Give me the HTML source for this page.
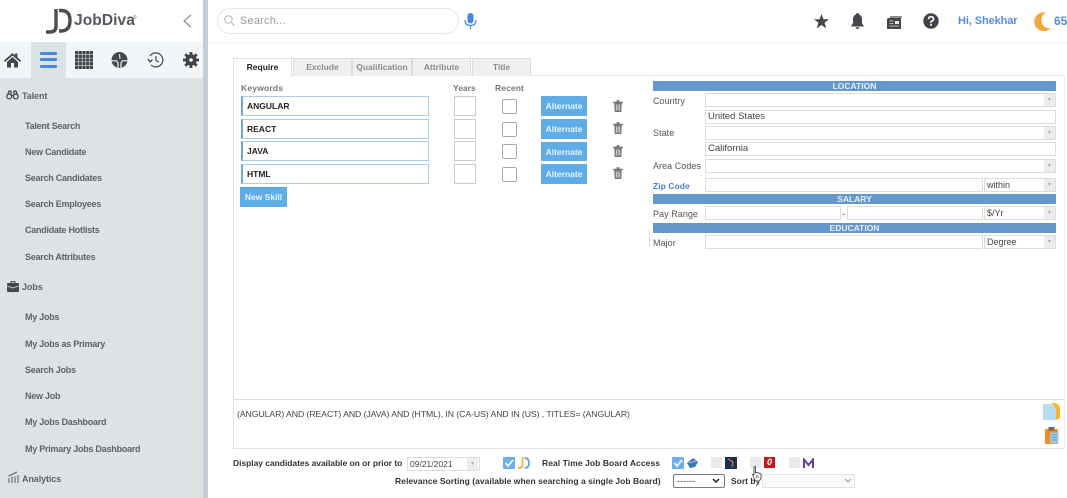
<!DOCTYPE html>
<html><head><meta charset="utf-8"><style>
html,body{margin:0;padding:0;background:#fff}
body{width:1067px;height:498px;overflow:hidden;position:relative;font-family:"Liberation Sans",sans-serif}
#r{position:absolute;left:0;top:0;width:1067px;height:498px;overflow:hidden;filter:blur(.35px)}
#r div,#r span.a,#r svg{position:absolute}
.t{white-space:nowrap;line-height:12px}
.n{left:25px;font:bold 9px/12px "Liberation Sans",sans-serif;color:#5d6369;white-space:nowrap;letter-spacing:-.25px}
.h{left:22px;font:bold 9px/12px "Liberation Sans",sans-serif;color:#5d6369;white-space:nowrap;letter-spacing:-.1px}
.tab{top:58px;height:17px;background:#f0f0f0;border:1px solid #dcdcdc;border-bottom:none;font:bold 8.5px/17px "Liberation Sans",sans-serif;color:#8b8b8b;text-align:center;box-sizing:content-box}
.kw{left:241px;width:185px;height:18px;background:#fff;border:1px solid #a9cde6;border-left:2px solid #6fa6d2;font:bold 8.5px/18px "Liberation Sans",sans-serif;color:#222;text-indent:4px}
.yr{left:454px;width:20px;height:18px;border:1px solid #ccc;background:#fff}
.rc{left:502px;width:13px;height:13px;border:1px solid #aaa;border-radius:2px;background:#fff}
.alt{left:541px;width:46px;height:20px;background:#5fade6;color:#e8f4fc;font:bold 8.5px/20px "Liberation Sans",sans-serif;text-align:center}
.lab{left:653px;font:9px/12px "Liberation Sans",sans-serif;color:#555;white-space:nowrap;letter-spacing:.05px}
.bar{left:653px;width:403px;height:10px;background:#6498cc;color:#e6eff8;font:bold 8.5px/10px "Liberation Sans",sans-serif;text-align:center}
.f{height:12px;border:1px solid #ddd;background:#fff;font:9.5px/12px "Liberation Sans",sans-serif;color:#444;text-indent:2px;white-space:nowrap}
.dd{width:11px;height:12px;background:#ececec;color:#aaa;font:5px/12px "Liberation Sans",sans-serif;text-align:center}
.b{font:bold 8.5px/12px "Liberation Sans",sans-serif;color:#333;white-space:nowrap}
.sq{width:11px;height:11px;background:#eaeaea}
</style></head><body><div id="r">

<!-- sidebar -->
<div style="left:0;top:0;width:203px;height:498px;background:#dde2e5"></div>
<div style="left:0;top:0;width:203px;height:42px;background:#fff"></div>
<div style="left:0;top:42px;width:203px;height:36px;background:#f2f6f9"></div>
<div style="left:31px;top:42px;width:35px;height:36px;background:#dde2e5"></div>
<div style="left:203px;top:0;width:5px;height:498px;background:#c4ced6"></div>

<!-- logo -->
<svg style="left:44px;top:8px" width="28" height="26" viewBox="0 0 28 26" fill="none" stroke="#4a4e52" stroke-width="3.4"><path d="M12 1V18Q12 24 6 24H2"/><path d="M15 2.500H17Q26 2.500 26 12.500Q26 23 17 23H15"/></svg>
<div class="t" style="left:74px;top:13px;font:bold 15.500px/16px 'Liberation Sans',sans-serif;color:#55595d;letter-spacing:.1px">JobDiva</div>
<div class="t" style="left:133px;top:15px;font:5px/6px 'Liberation Sans',sans-serif;color:#777">®</div>
<svg style="left:183px;top:14px" width="9" height="14" viewBox="0 0 9 14" fill="none" stroke="#777" stroke-width="1"><path d="M8 1 1 7 8 13"/></svg>

<!-- icon row -->
<svg style="left:4px;top:52px" width="17" height="16" viewBox="0 0 17 16" fill="#44484c"><path d="M8.500 1 0 8.500 1 10 8.500 3.500 16 10 17 8.500 13.500 5.500V1.500H11V3.300Z"/><path d="M3 10 8.500 5 14 10V15.500H10V11H7V15.500H3Z"/></svg>
<div style="left:40px;top:52px;width:17px;height:3px;background:#4a86dc;border-radius:1px"></div>
<div style="left:40px;top:58px;width:17px;height:3px;background:#4a86dc;border-radius:1px"></div>
<div style="left:40px;top:65px;width:17px;height:3px;background:#4a86dc;border-radius:1px"></div>
<svg style="left:75px;top:51px" width="18" height="18" viewBox="0 0 18 18"><rect width="18" height="18" fill="#3f4347"/><path d="M3.600 0V18M7.200 0V18M10.800 0V18M14.400 0V18M0 3.600H18M0 7.200H18M0 10.800H18M0 14.400H18" stroke="#c8ccd0" stroke-width=".7"/></svg>
<svg style="left:111px;top:51px" width="17" height="18" viewBox="0 0 17 18"><circle cx="8.500" cy="9" r="8" fill="#44484c"/><path d="M0 9.800H5.500L7 12V17M10 17V12L11.500 9.800H17" fill="none" stroke="#f2f6f9" stroke-width="1.200"/><path d="M8.500 3 9 8" stroke="#f2f6f9"/></svg>
<svg style="left:147px;top:51px" width="18" height="18" viewBox="0 0 18 18" fill="none" stroke="#44484c" stroke-width="1.200"><path d="M3 5A7 7 0 1 1 4 14"/><path d="M9 5V9.500L12 11"/><path d="M1 8 3 11 5.500 8.500" stroke-width="1.300"/></svg>
<svg style="left:183px;top:52px" width="16" height="16" viewBox="0 0 16 16"><circle cx="8" cy="8" r="4" fill="none" stroke="#3f4347" stroke-width="3.400"/><path d="M8 0V16M0 8H16M2.300 2.300 13.700 13.700M13.700 2.300 2.300 13.700" stroke="#3f4347" stroke-width="2.800"/><circle cx="8" cy="8" r="1.800" fill="#f2f6f9"/></svg>

<!-- menu -->
<svg style="left:6px;top:90px" width="13" height="10" viewBox="0 0 13 10" fill="none" stroke="#44484c" stroke-width="1.300"><circle cx="3.200" cy="6.500" r="2.400"/><circle cx="9.800" cy="6.500" r="2.400"/><path d="M5 5.500H8M1.500 5 3 1.200H5V5M11.500 5 10 1.200H8V5"/></svg>
<div class="h" style="top:90px">Talent</div>
<div class="n" style="top:120px">Talent Search</div>
<div class="n" style="top:146px">New Candidate</div>
<div class="n" style="top:172px">Search Candidates</div>
<div class="n" style="top:198px">Search Employees</div>
<div class="n" style="top:224px">Candidate Hotlists</div>
<div class="n" style="top:251px">Search Attributes</div>
<svg style="left:7px;top:281px" width="12" height="11" viewBox="0 0 12 11"><path d="M4 2V.6H8V2" fill="none" stroke="#44484c"/><rect y="2" width="12" height="9" rx="1" fill="#44484c"/><path d="M0 5 6 7 12 5" stroke="#dde2e5" fill="none" stroke-width=".7"/></svg>
<div class="h" style="top:281px">Jobs</div>
<div class="n" style="top:311px">My Jobs</div>
<div class="n" style="top:338px">My Jobs as Primary</div>
<div class="n" style="top:364px">Search Jobs</div>
<div class="n" style="top:390px">New Job</div>
<div class="n" style="top:416px">My Jobs Dashboard</div>
<div class="n" style="top:443px">My Primary Jobs Dashboard</div>
<svg style="left:8px;top:471px" width="11" height="12" viewBox="0 0 11 12" fill="none" stroke="#5a5f64"><path d="M1 12V7M4 12V5.500M7 12V5.500M10 12V4M.5 5 6 2.500 9 1"/></svg>
<div class="h" style="top:473px">Analytics</div>

<!-- header -->
<div style="left:208px;top:42px;width:859px;height:2px;background:#f6f6f6"></div>
<div style="left:217px;top:8px;width:240px;height:24px;border:1px solid #e8e8e8;border-radius:13px;background:#fff"></div>
<svg style="left:224px;top:15px" width="11" height="12" viewBox="0 0 11 12" fill="none" stroke="#bbb" stroke-width="1.100"><circle cx="4.500" cy="4.500" r="3.700"/><path d="M7.500 7.500 10.500 11"/></svg>
<div class="t" style="left:240px;top:15px;font:11px/12px 'Liberation Sans',sans-serif;color:#9a9a9a;letter-spacing:.2px">Search...</div>
<svg style="left:464px;top:13px" width="13" height="16" viewBox="0 0 13 16" fill="none"><rect x="3.500" y="0" width="6" height="10.500" rx="3" fill="#4a86dc"/><path d="M1 7Q1 12.500 6.500 12.500T12 7M6.500 12.500V16" stroke="#4a86dc" stroke-width="1.200"/></svg>
<svg style="left:814px;top:14px" width="15" height="15" viewBox="0 0 15 15" fill="#44484c"><path d="M7.500 0 9.500 5.300H15L10.600 8.700 12.300 14.500 7.500 11 2.700 14.500 4.400 8.700 0 5.300H5.500Z"/></svg>
<svg style="left:851px;top:13px" width="13" height="16" viewBox="0 0 13 16" fill="#44484c"><path d="M6.500 0Q8 0 8 1.500 11 2.500 11 6V10L13 13.500H0L2 10V6Q2 2.500 5 1.500 5 0 6.500 0Z"/><path d="M4.500 14.300H8.500Q8 16 6.500 16T4.500 14.300Z"/></svg>
<svg style="left:887px;top:16px" width="15" height="13" viewBox="0 0 15 13"><path d="M1 2H14V13H0V3Z" fill="#44484c"/><path d="M3 0H15V2H3Z" fill="#8a8e92"/><rect x="8" y="5" width="4" height="3" fill="#e8e8e8"/><path d="M2.500 5H6.500M2.500 7.500H6.500M2.500 10H12" stroke="#d8d8d8" stroke-width=".8"/></svg>
<svg style="left:923px;top:13px" width="16" height="16" viewBox="0 0 16 16"><circle cx="8" cy="8" r="7.700" fill="#3f4347"/><path d="M5.500 6.200Q5.500 3.700 8 3.700T10.500 6Q10.500 7.300 9 8T8 9.800" fill="none" stroke="#fff" stroke-width="1.600"/><rect x="7.100" y="10.800" width="1.800" height="1.800" fill="#fff"/></svg>
<div class="t" style="left:958px;top:15px;font:bold 11px/12px 'Liberation Sans',sans-serif;color:#5a8ddc;letter-spacing:-.1px">Hi, Shekhar</div>
<svg style="left:1034px;top:12px" width="17" height="19" viewBox="0 0 17 19"><path d="M12 .5A9.500 9.500 0 1 0 16.500 16.500A8.500 8.500 0 0 1 12 .5Z" fill="#f2a93c"/></svg>
<div class="t" style="left:1054px;top:15px;font:bold 12px/12px 'Liberation Sans',sans-serif;color:#5a8ddc">65</div>

<!-- form frame -->
<div style="left:233px;top:75px;width:832px;height:374px;border:1px solid #e2e2e2;border-right:1px solid #eee;box-sizing:border-box;background:#fff"></div>
<div style="left:234px;top:399px;width:831px;height:1px;background:#dcdcdc"></div>
<div style="left:649px;top:230px;width:1px;height:17px;background:#ddd"></div>

<!-- tabs -->
<div class="tab" style="left:233px;width:57px;background:#fff;color:#222;border-color:#e2e2e2;height:18px;z-index:2">Require</div>
<div class="tab" style="left:293px;width:57px">Exclude</div>
<div class="tab" style="left:352px;width:58px">Qualification</div>
<div class="tab" style="left:412px;width:57px">Attribute</div>
<div class="tab" style="left:472px;width:57px">Title</div>

<div class="t" style="left:241px;top:82px;font:bold 8.500px/12px 'Liberation Sans',sans-serif;color:#777;letter-spacing:.2px">Keywords</div>
<div class="t" style="left:453px;top:82px;font:bold 8.500px/12px 'Liberation Sans',sans-serif;color:#777">Years</div>
<div class="t" style="left:495px;top:82px;font:bold 8.500px/12px 'Liberation Sans',sans-serif;color:#777;letter-spacing:.1px">Recent</div>

<div class="kw" style="top:96px">ANGULAR</div><div class="yr" style="top:96px"></div><div class="rc" style="top:99px"></div><div class="alt" style="top:96px">Alternate</div>
<div class="kw" style="top:119px">REACT</div><div class="yr" style="top:119px"></div><div class="rc" style="top:122px"></div><div class="alt" style="top:119px">Alternate</div>
<div class="kw" style="top:141px">JAVA</div><div class="yr" style="top:141px"></div><div class="rc" style="top:144px"></div><div class="alt" style="top:142px;height:19px">Alternate</div>
<div class="kw" style="top:164px">HTML</div><div class="yr" style="top:164px"></div><div class="rc" style="top:167px"></div><div class="alt" style="top:164px">Alternate</div>
<div class="alt" style="left:240px;width:47px;height:20px;top:187px;line-height:20px">New Skill</div>

<svg style="left:613px;top:100px" width="10" height="12" viewBox="0 0 10 12"><path d="M0 1.800H10V3H0ZM3.500 1.800V.3H6.500V1.800" fill="#777"/><path d="M1.200 3H8.800L8.300 12H1.700Z" fill="#777"/><path d="M3.300 4.500V10.500M5 4.500V10.500M6.700 4.500V10.500" stroke="#e4e4e4" stroke-width=".8"/></svg>
<svg style="left:613px;top:122px" width="10" height="12" viewBox="0 0 10 12"><path d="M0 1.800H10V3H0ZM3.500 1.800V.3H6.500V1.800" fill="#777"/><path d="M1.200 3H8.800L8.300 12H1.700Z" fill="#777"/><path d="M3.300 4.500V10.500M5 4.500V10.500M6.700 4.500V10.500" stroke="#e4e4e4" stroke-width=".8"/></svg>
<svg style="left:613px;top:145px" width="10" height="12" viewBox="0 0 10 12"><path d="M0 1.800H10V3H0ZM3.500 1.800V.3H6.500V1.800" fill="#777"/><path d="M1.200 3H8.800L8.300 12H1.700Z" fill="#777"/><path d="M3.300 4.500V10.500M5 4.500V10.500M6.700 4.500V10.500" stroke="#e4e4e4" stroke-width=".8"/></svg>
<svg style="left:613px;top:167px" width="10" height="12" viewBox="0 0 10 12"><path d="M0 1.800H10V3H0ZM3.500 1.800V.3H6.500V1.800" fill="#777"/><path d="M1.200 3H8.800L8.300 12H1.700Z" fill="#777"/><path d="M3.300 4.500V10.500M5 4.500V10.500M6.700 4.500V10.500" stroke="#e4e4e4" stroke-width=".8"/></svg>

<!-- right panel -->
<div class="bar" style="top:81px">LOCATION</div>
<div class="lab" style="top:95px">Country</div>
<div class="f" style="left:705px;top:93px;width:349px"></div><div class="dd" style="left:1044px;top:94px">▼</div>
<div class="f" style="left:705px;top:110px;width:349px">United States</div>
<div class="lab" style="top:127px">State</div>
<div class="f" style="left:705px;top:126px;width:349px"></div><div class="dd" style="left:1044px;top:127px">▼</div>
<div class="f" style="left:705px;top:142px;width:349px">California</div>
<div class="lab" style="top:160px">Area Codes</div>
<div class="f" style="left:705px;top:159px;width:349px"></div><div class="dd" style="left:1044px;top:160px">▼</div>
<div class="lab" style="top:180px;color:#4a7fd0;font-weight:bold;font-size:8.500px">Zip Code</div>
<div class="f" style="left:705px;top:178px;width:276px"></div>
<div class="f" style="left:984px;top:178px;width:70px;font-size:9px">within</div><div class="dd" style="left:1044px;top:179px">▼</div>
<div class="bar" style="top:194px">SALARY</div>
<div class="lab" style="top:208px">Pay Range</div>
<div class="f" style="left:705px;top:206px;width:134px"></div>
<div class="t" style="left:842px;top:208px;font:9px/12px 'Liberation Sans',sans-serif;color:#555">-</div>
<div class="f" style="left:847px;top:206px;width:134px"></div>
<div class="f" style="left:984px;top:206px;width:70px;font-size:9px">$/Yr</div><div class="dd" style="left:1044px;top:207px">▼</div>
<div class="bar" style="top:223px">EDUCATION</div>
<div class="lab" style="top:237px">Major</div>
<div class="f" style="left:705px;top:235px;width:276px"></div>
<div class="f" style="left:984px;top:235px;width:70px;font-size:9px">Degree</div><div class="dd" style="left:1044px;top:236px">▼</div>

<!-- query -->
<div class="t" style="left:237px;top:408px;font:8.700px/12px 'Liberation Sans',sans-serif;color:#444;letter-spacing:-.07px">(ANGULAR) AND (REACT) AND (JAVA) AND (HTML), IN (CA-US) AND IN (US) , TITLES= (ANGULAR)</div>
<svg style="left:1043px;top:403px" width="17" height="17" viewBox="0 0 17 17"><path d="M8 0H12Q17 1 17 6V15L13 17V6Z" fill="#f7b52e"/><path d="M0 1H8L13 6V17H0Z" fill="#b5dcf3"/></svg>
<svg style="left:1045px;top:427px" width="14" height="17" viewBox="0 0 14 17"><rect y="2" width="13" height="15" rx="1" fill="#f28c1e"/><rect x="3.500" y="0" width="6" height="3.500" fill="#6a6a6a"/><rect x="5" y="5.500" width="8.500" height="11" fill="#9ec9e4"/><path d="M6.500 8H12M6.500 10.500H12M6.500 13H12" stroke="#5f93b5" stroke-width=".7"/></svg>

<!-- bottom -->
<div class="b" style="left:233px;top:457px;letter-spacing:-.04px">Display candidates available on or prior to</div>
<div class="f" style="left:407px;top:457px;width:71px;font-size:8.500px;line-height:12px">09/21/2021</div><div class="dd" style="left:467px;top:458px">▼</div>
<svg style="left:503px;top:457px" width="12" height="12" viewBox="0 0 12 12"><rect width="12" height="12" rx="1" fill="#6fb0e8"/><path d="M2.500 6 5 9 10 3" fill="none" stroke="#fff" stroke-width="1.600"/></svg>
<svg style="left:518px;top:457px" width="12" height="12" viewBox="0 0 12 12" fill="none" stroke-width="2"><path d="M4.500 0V8Q4.500 11 1 11H0" stroke="#f5b93e"/><path d="M6.500 1Q11 1 11 6T6.500 11" stroke="#6fa8e0"/></svg>
<div class="b" style="left:542px;top:457px;letter-spacing:.07px">Real Time Job Board Access</div>
<div class="b" style="left:395px;top:475px;letter-spacing:.04px">Relevance Sorting (available when searching a single Job Board)</div>

<svg style="left:672px;top:457px" width="12" height="12" viewBox="0 0 12 12"><rect width="12" height="12" rx="1" fill="#6fb0e8"/><path d="M2.500 6 5 9 10 3" fill="none" stroke="#fff" stroke-width="1.600"/></svg>
<svg style="left:687px;top:457px" width="11" height="11" viewBox="0 0 11 11"><path d="M0 6 6 1 11 5 8 10 3 11Z" fill="#3d78ad"/><path d="M2 6 9 4" stroke="#cde" stroke-width=".8"/></svg>
<div class="sq" style="left:711px;top:457px"></div>
<div style="left:725px;top:457px;width:12px;height:12px;background:#1b2f55"></div>
<svg style="left:727px;top:458px" width="8" height="10" viewBox="0 0 8 10" fill="none" stroke="#d07a30" stroke-width="1.300"><path d="M1 1 6 4 5 9"/></svg>
<div class="sq" style="left:750px;top:457px"></div>
<div style="left:764px;top:457px;width:11px;height:11px;background:#c8171d"></div>
<div class="t" style="left:767px;top:457px;font:italic bold 9px/11px 'Liberation Sans',sans-serif;color:#fff">0</div>
<div class="sq" style="left:789px;top:457px"></div>
<svg style="left:803px;top:458px" width="11" height="10" viewBox="0 0 11 10" fill="none" stroke="#67419b" stroke-width="2"><path d="M1 10V1.500L5.500 7 10 1.500V10"/></svg>

<div style="left:673px;top:474px;width:50px;height:12px;border:1px solid #777;border-radius:2px;background:#fff;font:9px/12px 'Liberation Sans',sans-serif;color:#333;text-indent:3px">------</div>
<svg style="left:712px;top:478px" width="8" height="6" viewBox="0 0 8 6" fill="none" stroke="#222" stroke-width="1.500"><path d="M1 1 4 4 7 1"/></svg>
<div class="b" style="left:731px;top:475px">Sort by</div>
<div style="left:762px;top:474px;width:91px;height:12px;border:1px solid #e2e2e2;border-radius:2px;background:#fafafa"></div>
<svg style="left:844px;top:478px" width="8" height="6" viewBox="0 0 8 6" fill="none" stroke="#999" stroke-width="1"><path d="M1 1 4 4 7 1"/></svg>
<svg style="left:752px;top:466px" width="10" height="15" viewBox="0 0 10 15"><path d="M2 1Q3 0 3.500 1V7L5 6.500 7 7 9 8V12L7.500 15H3.500L1 10 .5 8.500 2 8.500Z" fill="#f4f4f4" stroke="#333" stroke-width=".8"/><path d="M4.500 9V12M6 9V12" stroke="#333" stroke-width=".5"/></svg>

</div></body></html>
